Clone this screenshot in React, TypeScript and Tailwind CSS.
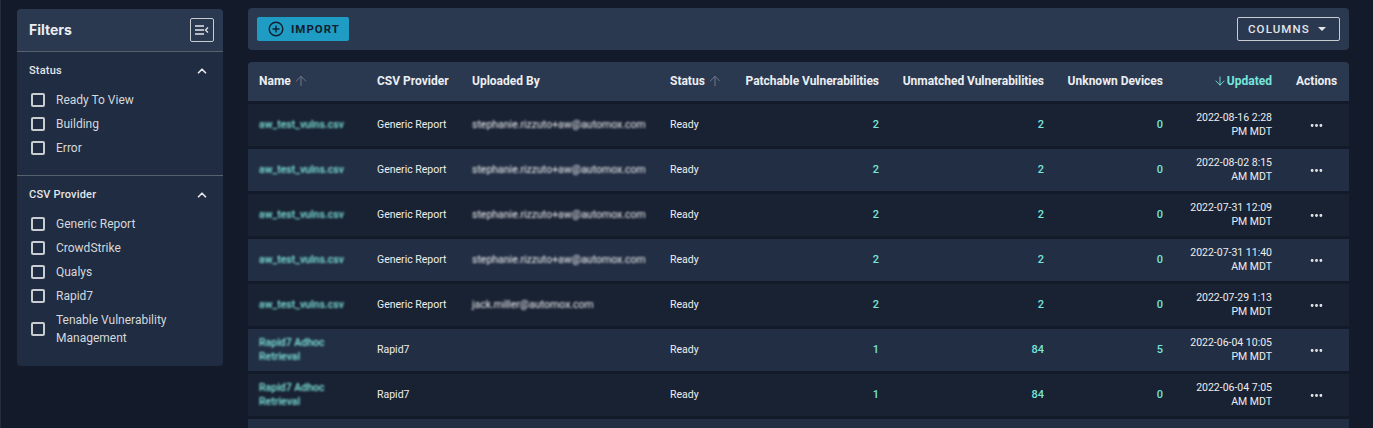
import React from 'react';
import { ArrowDown, ArrowUp, ChevronUp, Ellipsis } from 'lucide-react';

interface Row {
  name: string;
  provider: string;
  uploadedBy: string;
  patchable: number;
  unmatched: number;
  unknown: number;
  updated: string;
}

const columns = 'grid grid-cols-[118px_95px_198px_209px_165px_119px_109px_65px] pl-[11px] pr-[12px] items-center';

const rows: Row[] = [
  { name: 'aw_test_vulns.csv', provider: 'Generic Report', uploadedBy: 'stephanie.rizzuto+aw@automox.com', patchable: 2, unmatched: 2, unknown: 0, updated: '2022-08-16 2:28 PM MDT' },
  { name: 'aw_test_vulns.csv', provider: 'Generic Report', uploadedBy: 'stephanie.rizzuto+aw@automox.com', patchable: 2, unmatched: 2, unknown: 0, updated: '2022-08-02 8:15 AM MDT' },
  { name: 'aw_test_vulns.csv', provider: 'Generic Report', uploadedBy: 'stephanie.rizzuto+aw@automox.com', patchable: 2, unmatched: 2, unknown: 0, updated: '2022-07-31 12:09 PM MDT' },
  { name: 'aw_test_vulns.csv', provider: 'Generic Report', uploadedBy: 'stephanie.rizzuto+aw@automox.com', patchable: 2, unmatched: 2, unknown: 0, updated: '2022-07-31 11:40 AM MDT' },
  { name: 'aw_test_vulns.csv', provider: 'Generic Report', uploadedBy: 'jack.miller@automox.com', patchable: 2, unmatched: 2, unknown: 0, updated: '2022-07-29 1:13 PM MDT' },
  { name: 'Rapid7 Adhoc Retrieval', provider: 'Rapid7', uploadedBy: '', patchable: 1, unmatched: 84, unknown: 5, updated: '2022-06-04 10:05 PM MDT' },
  { name: 'Rapid7 Adhoc Retrieval', provider: 'Rapid7', uploadedBy: '', patchable: 1, unmatched: 84, unknown: 0, updated: '2022-06-04 7:05 AM MDT' },
];

function FilterOption({ label }: { label: string }) {
  return (
    <label className={`flex items-center gap-[11px] min-h-[24px] ${label.length > 20 ? 'mt-[3px]' : ''}`}>
      <span className="w-[14px] h-[14px] shrink-0 ml-[2px] rounded-[2px] border-2 border-[#c9ccd1]" />
      <span className="text-[12px] leading-[18px] text-[#d5d8dc] max-w-[130px]">{label}</span>
    </label>
  );
}

function FilterSection({ title, options, className }: { title: string; options: string[]; className: string }) {
  return (
    <div className={className}>
      <div className="flex items-center justify-between pr-[14px] h-[18px]">
        <span className="text-[11px] font-medium tracking-[0.2px] text-[#e4e6e9]">{title}</span>
        <ChevronUp size={14} strokeWidth={3} className="text-[#e4e6e9]" />
      </div>
      <div className="mt-[8px]">
        {options.map((option) => (
          <FilterOption key={option} label={option} />
        ))}
      </div>
    </div>
  );
}

export default function App() {
  return (
    <div className="h-screen overflow-hidden bg-[#131b2a] border-l border-[#242d3c] flex items-start pl-[16px] font-['Roboto',sans-serif]">
      {/* Sidebar */}
      <aside className="w-[206px] shrink-0 mt-[9px] rounded-[4px] bg-[#202c41]">
        <div className="h-[43px] flex items-center justify-between pl-[12px] pr-[9px] pb-[1px] border-b border-[#56606f] bg-[#2a3850] rounded-t-[4px]">
          <span className="font-['Inter',sans-serif] text-[14px] font-bold text-[#eceef0]">Filters</span>
          <button className="w-[24px] h-[24px] flex items-center justify-center rounded-[2px] border border-[#c9ccd1]">
            <svg width="14" height="10" viewBox="0 0 14 10" fill="none" stroke="#e4e6e9" strokeWidth="1.3">
              <path d="M0 1h9M0 5h9M0 9h9" />
              <path d="M13 2.5 10.5 5 13 7.5" />
            </svg>
          </button>
        </div>
        <FilterSection
          title="Status"
          options={['Ready To View', 'Building', 'Error']}
          className="pl-[12px] pt-[10px] pb-[15px] border-b border-[#56606f]"
        />
        <FilterSection
          title="CSV Provider"
          options={['Generic Report', 'CrowdStrike', 'Qualys', 'Rapid7', 'Tenable Vulnerability Management']}
          className="pl-[12px] pt-[10px] pb-[19px]"
        />
      </aside>

      {/* Main */}
      <main className="w-[1101px] ml-[25px] mt-[8px] shrink-0">
        <div className="h-[42px] flex items-center justify-between px-[9px] rounded-[4px] bg-[#2a3850]">
          <button className="w-[92px] h-[24px] flex items-center gap-[7px] pl-[11px] rounded-[2px] bg-[#1f9cc4] text-[#10202f]">
            <svg width="16" height="16" viewBox="0 0 16 16" fill="none" stroke="currentColor" strokeWidth="1.4">
              <circle cx="8" cy="8" r="6.8" />
              <path d="M8 4.5v7M4.5 8h7" />
            </svg>
            <span className="text-[11.5px] font-bold tracking-[1px] pt-[1px]">IMPORT</span>
          </button>
          <button className="w-[103px] h-[24px] flex items-center pl-[10px] gap-[8px] rounded-[2px] border border-[#c9ccd1] text-[#e4e6e9]">
            <span className="text-[11.5px] font-medium tracking-[1.1px] pt-[2px]">COLUMNS</span>
            <span className="w-0 h-0 border-x-[4px] border-x-transparent border-t-[4px] border-t-[#e4e6e9]" />
          </button>
        </div>

        <div className="mt-[12px]">
          {/* Table header */}
          <div className={`${columns} h-[39px] pb-[2px] rounded-t-[4px] bg-[#2a3850] text-[12px] font-bold text-[#eceef0]`}>
            <div className="flex items-center gap-[2px]">
              Name <ArrowUp size={16} strokeWidth={1.5} className="text-[#6f7989]" />
            </div>
            <div>CSV Provider</div>
            <div>Uploaded By</div>
            <div className="flex items-center justify-between">
              <div className="flex items-center gap-[2px]">
                Status <ArrowUp size={16} strokeWidth={1.5} className="text-[#6f7989]" />
              </div>
              <div className="tracking-[-0.04px]">Patchable Vulnerabilities</div>
            </div>
            <div className="text-right tracking-[-0.04px]">Unmatched Vulnerabilities</div>
            <div className="text-right">Unknown Devices</div>
            <div className="flex items-center justify-end text-[#76e6dc]">
              <ArrowDown size={14} strokeWidth={1.5} /> Updated
            </div>
            <div className="pl-[24px]">Actions</div>
          </div>

          {/* Table rows */}
          <div className="flex flex-col gap-[3px] mt-[3px]">
            {rows.map((row, i) => (
              <div
                key={row.updated}
                className={`${columns} h-[42px] text-[10.5px] text-[#eceef0] ${i % 2 === 0 ? 'bg-[#192233]' : 'bg-[#222e43]'}`}
              >
                <div className="pr-[28px] leading-[14px] font-medium text-[#7fe8e0] blur-[0.8px]">{row.name}</div>
                <div>{row.provider}</div>
                <div className="text-[#f2f3f5] blur-[0.8px]">{row.uploadedBy}</div>
                <div className="flex items-center justify-between text-[11px]">
                  <span className="text-[10.5px]">Ready</span>
                  <span className="font-medium text-[#76e6dc]">{row.patchable}</span>
                </div>
                <div className="text-right text-[11px] font-medium text-[#76e6dc]">{row.unmatched}</div>
                <div className="text-right text-[11px] font-medium text-[#76e6dc]">{row.unknown}</div>
                <div className="text-right leading-[14px] pl-[25px]">{row.updated}</div>
                <div className="pl-[37px]">
                  <Ellipsis size={15} strokeWidth={2.6} />
                </div>
              </div>
            ))}
            <div className="h-[42px] bg-[#222e43]" />
          </div>
        </div>
      </main>
    </div>
  );
}
